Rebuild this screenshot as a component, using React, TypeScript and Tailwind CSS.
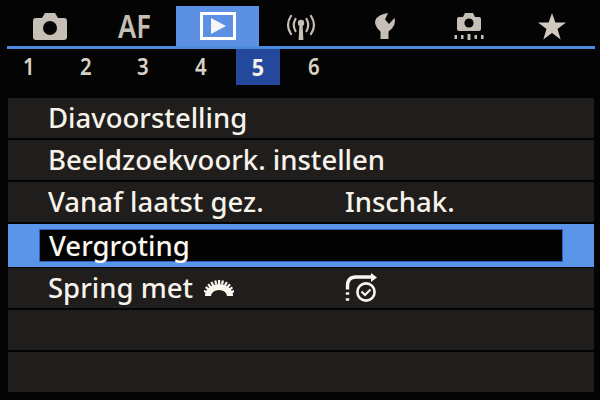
import type { ReactNode } from 'react';

const font = { fontFamily: '"Noto Sans", "Open Sans", sans-serif' };

function Camera() {
  return (
    <svg width="34" height="27" viewBox="0 0 34 27">
      <path fill="#c6bfb5" d="M3 5h6l3-5h10l3 5h6q3 0 3 3v16q0 3-3 3H3q-3 0-3-3V8q0-3 3-3z" />
      <circle cx="17" cy="15" r="7" fill="#060606" />
    </svg>
  );
}

function Play() {
  return (
    <svg width="36" height="28" viewBox="0 0 36 28">
      <rect x="1.5" y="1.5" width="33" height="25" fill="none" stroke="#ffffff" strokeWidth="3" />
      <path d="M11 6l15 8l-15 8z" fill="#f4f6fb" />
    </svg>
  );
}

function Wireless() {
  return (
    <svg width="30" height="27" viewBox="0 0 30 27" fill="none" stroke="#c6bfb5" strokeLinecap="round">
      <path strokeWidth="2.2" d="M5 3Q-1 12 5 21M25 3Q31 12 25 21" />
      <path strokeWidth="2.2" d="M9.5 6Q6 12 9.5 18M20.5 6Q24 12 20.5 18" />
      <circle cx="15" cy="10" r="3.2" fill="#c6bfb5" stroke="none" />
      <path d="M13.4 12h3.2l.8 15h-4.8z" fill="#c6bfb5" stroke="none" />
    </svg>
  );
}

function Wrench() {
  return (
    <svg width="20" height="26" viewBox="0 0 20 26">
      <path
        fill="#c6bfb5"
        d="M13 0L10 6.5L14 11L19.5 5Q21 11 17 15.5L13.5 18.5V26H5.5V18.5L2.5 15.5Q-1 11 .5 7Q3 1.5 13 0z"
      />
    </svg>
  );
}

function SensorClean() {
  return (
    <svg width="30" height="27" viewBox="0 0 30 27">
      <path fill="#c6bfb5" d="M5 4h4l2-4h8l2 4h4q2 0 2 2v10q0 2-2 2H5q-2 0-2-2V6q0-2 2-2z" />
      <circle cx="15" cy="10" r="4.6" fill="#060606" />
      <rect x="0.5" y="22" width="2.5" height="4" fill="#c6bfb5" />
      <rect x="7" y="22" width="2.5" height="4" fill="#c6bfb5" />
      <rect x="13.5" y="21" width="3" height="6" fill="#c6bfb5" />
      <rect x="20.5" y="22" width="2.5" height="4" fill="#c6bfb5" />
      <rect x="27" y="22" width="2.5" height="4" fill="#c6bfb5" />
    </svg>
  );
}

function Star() {
  return (
    <svg width="28" height="27" viewBox="0 0 28 27">
      <path fill="#cfc9bf" d="M14 0l3.4 9.6H28l-8.5 6.4l3.2 10.4L14 20l-8.7 6.4L8.5 16L0 9.6h10.6z" />
    </svg>
  );
}

function Dial() {
  return (
    <svg width="30" height="17" viewBox="0 0 30 17" className="ml-[11px] shrink-0">
      <path d="M1 16A14 12 0 0 1 29 16L23 16A8 6 0 0 0 7 16Z" fill="#fbf7ef" />
      {[-72, -57, -43, -29, -14, 0, 14, 29, 43, 57, 72].map((a) => (
        <rect key={a} x="14" y="0" width="2.2" height="4" fill="#fbf7ef" transform={`rotate(${a} 15 16)`} />
      ))}
    </svg>
  );
}

function JumpIcon() {
  return (
    <svg width="33" height="30" viewBox="0 0 33 30" fill="none" stroke="#fbf7ef" className="shrink-0">
      <path d="M2.5 16.5V13Q2.5 4 11 4H27" strokeWidth="3.4" />
      <path d="M26 0L32 4.5L26 9z" fill="#fbf7ef" stroke="none" />
      <circle cx="21" cy="19" r="8.6" strokeWidth="2.6" />
      <path d="M16.5 18.5L20 22L25.5 16.5" strokeWidth="2.2" />
      <path d="M0.8 20.5h3.4M0.8 26.5h3.4" strokeWidth="2.6" />
    </svg>
  );
}

function Row({ children, selected }: { children?: ReactNode; selected?: boolean }) {
  if (selected) {
    return (
      <div className="h-[43px] bg-[#5b95ea] pl-[31px] pr-[31px] py-[5px] -mb-[1px]">
        <div className="h-full bg-[#030304] border border-[#2c5fc4] pl-[9px] flex items-center text-[27.5px] font-medium leading-none text-[#fbf7ef]">
          {children}
        </div>
      </div>
    );
  }
  return (
    <div className="h-[40px] bg-[#1f1e1c] pl-[40px] flex items-center text-[27.5px] font-medium leading-none text-[#f7f3ea]">
      {children}
    </div>
  );
}

export default function App() {
  return (
    <div className="w-[600px] h-[400px] bg-[#040404] overflow-hidden pl-[7px] pr-[5px] pt-[6px]" style={font}>
      <div className="h-[40px] flex items-stretch">
        <div className="w-[169px] flex">
          <div className="w-[85px] flex items-center justify-center pl-[1px]"><Camera /></div>
          <div className="w-[84px] flex items-center justify-center font-semibold text-[32px] text-[#c6bfb5]">
            <span className="inline-block scale-x-[0.85]">AF</span>
          </div>
        </div>
        <div className="w-[83px] bg-[#5c90e2] flex items-center justify-center"><Play /></div>
        <div className="flex-1 flex">
          <div className="w-[84px] flex items-center justify-center"><Wireless /></div>
          <div className="w-[84px] flex items-center justify-center pr-[1px]"><Wrench /></div>
          <div className="w-[84px] flex items-center justify-center"><SensorClean /></div>
          <div className="w-[84px] flex items-center justify-center pr-[2px]"><Star /></div>
        </div>
      </div>
      <div className="h-[3px] bg-[#4c8ae0]" />
      <div className="h-[36px] flex font-semibold text-[24px] text-[#d8d2c6]">
        {['1', '2', '3', '4'].map((n) => (
          <div key={n} className="w-[57.25px] flex items-center justify-center pr-[14px] pb-[2px]">
            <span className="inline-block scale-x-[0.85]">{n}</span>
          </div>
        ))}
        <div className="w-[44px] bg-[#24499c] flex items-center justify-center text-[#f4f2ec] font-bold pb-[1px]">
          <span className="inline-block scale-x-[0.9]">5</span>
        </div>
        <div className="w-[68px] flex items-center justify-center pb-[2px]">
          <span className="inline-block scale-x-[0.85]">6</span>
        </div>
      </div>
      <div className="mt-[13px] mr-[1px] flex flex-col gap-[2px] pl-[1px]">
        <Row>Diavoorstelling</Row>
        <Row>Beeldzoekvoork. instellen</Row>
        <Row>
          <span className="w-[297px]">Vanaf laatst gez.</span>
          <span>Inschak.</span>
        </Row>
        <Row selected>Vergroting</Row>
        <Row>
          <span className="w-[297px] flex items-center">Spring met <Dial /></span>
          <JumpIcon />
        </Row>
        <Row />
        <Row />
      </div>
    </div>
  );
}
